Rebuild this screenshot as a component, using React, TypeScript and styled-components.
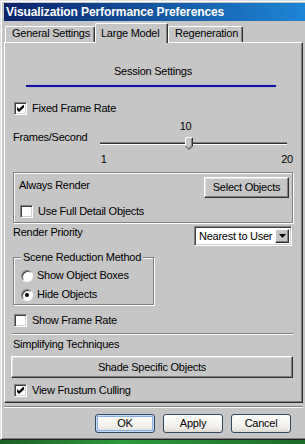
import styled, { createGlobalStyle, css } from 'styled-components';

const FACE = '#c6c6c6';

const GlobalStyle = createGlobalStyle`
  html, body {
    margin: 0;
    padding: 0;
  }
  body {
    background: #236e30;
    font-family: "Liberation Sans", Arial, sans-serif;
    font-size: 11px;
    letter-spacing: -0.25px;
    color: #000;
  }
  * {
    box-sizing: border-box;
  }
`;

const Desktop = styled.div`
  width: 305px;
  height: 444px;
  overflow: hidden;
  background: linear-gradient(to right, #1d5f28, #2f9a3e 40%, #1d6b2a);
`;

const Window = styled.div`
  width: 312px;
  height: 440px;
  display: flex;
  flex-direction: column;
  background: ${FACE};
  border-top: 1px solid #e2e2e2;
  border-left: 1px solid #e2e2e2;
  border-bottom: 1px solid #202020;
  box-shadow: inset 1px 1px 0 #fff, inset 0 -1px 0 #808080;
  padding: 2px 0 0 3px;
`;

const TitleBar = styled.div`
  height: 18px;
  background: linear-gradient(to right, #0a246a, #2088d8);
  color: #fff;
  font-weight: bold;
  font-size: 12px;
  letter-spacing: -0.1px;
  line-height: 18px;
  padding-left: 2px;
  white-space: nowrap;
`;

const TabStrip = styled.div`
  display: flex;
  align-items: flex-end;
  height: 20px;
  margin: 2px 0 -1px;
  padding-left: 1px;
  position: relative;
  z-index: 1;
`;

const Tab = styled.div<{ $active?: boolean; $w: number }>`
  width: ${(p) => p.$w}px;
  height: ${(p) => (p.$active ? 20 : 16)}px;
  margin-bottom: ${(p) => (p.$active ? 0 : 1)}px;
  background: ${FACE};
  border-top: 1px solid #fff;
  border-left: 1px solid #fff;
  border-right: 1px solid #303030;
  box-shadow: inset -1px 0 0 #808080;
  border-radius: 2px 2px 0 0;
  padding: ${(p) => (p.$active ? '3px 0 0 5px' : '0 0 0 6px')};
  line-height: 13px;
  white-space: nowrap;
`;

const Panel = styled.div`
  width: 299px;
  display: flex;
  flex-direction: column;
  border-top: 1px solid #fff;
  border-left: 1px solid #fff;
  border-right: 1px solid #303030;
  border-bottom: 1px solid #303030;
  box-shadow: inset -1px -1px 0 #808080;
  padding: 0 9px 5px 8px;
`;

const SectionTitle = styled.div`
  margin-top: 22px;
  text-align: center;
  line-height: 13px;
`;

const BlueRule = styled.div`
  height: 2px;
  margin: 7px 17px 0 13px;
  background: #1212a2;
  box-shadow: 0 0 1px #6a6ad0;
`;

const CheckRow = styled.label<{ $top: number }>`
  display: flex;
  align-items: center;
  gap: 5px;
  height: 13px;
  margin-top: ${(p) => p.$top}px;
  margin-left: 1px;
  line-height: 13px;
`;

const Box = styled.span`
  width: 13px;
  height: 13px;
  flex: none;
  display: flex;
  align-items: center;
  justify-content: center;
  background: #fff;
  border: 1px solid;
  border-color: #808080 #fff #fff #808080;
  box-shadow: inset 1px 1px 0 #404040, inset -1px -1px 0 #d4d0c8;
`;

const Text = styled.span`
  line-height: 13px;
  white-space: nowrap;
`;

const SliderRow = styled.div`
  display: flex;
  margin-top: 5px;
`;

const FieldLabel = styled.div`
  width: 87px;
  margin-top: 11px;
  line-height: 13px;
  white-space: nowrap;
`;

const SliderBox = styled.div`
  width: 194px;
  display: flex;
  flex-direction: column;
`;

const ValueLabel = styled.div`
  height: 13px;
  line-height: 13px;
`;

const TrackArea = styled.div`
  position: relative;
  height: 20px;
  padding-top: 9px;
`;

const Track = styled.div`
  width: 187px;
  height: 3px;
  border-top: 1px solid #808080;
  background: #303030;
  border-bottom: 1px solid #fff;
`;

const Thumb = styled.svg`
  position: absolute;
  top: 4px;
`;

const Scale = styled.div`
  display: flex;
  justify-content: space-between;
  padding-left: 1px;
  line-height: 13px;
`;

const etched = css`
  border: 1px solid #808080;
  box-shadow: inset 1px 1px 0 #fff, 1px 1px 0 #fff;
`;

const Group = styled.div`
  ${etched};
  margin-top: 6px;
  display: flex;
  flex-direction: column;
  padding: 4px 3px 4px 5px;
`;

const GroupHead = styled.div`
  display: flex;
  justify-content: space-between;
  align-items: flex-start;
`;

const GroupText = styled.div`
  margin-top: 2px;
  line-height: 13px;
`;

const ClassicButton = styled.button<{ $w?: number }>`
  width: ${(p) => (p.$w ? `${p.$w}px` : 'auto')};
  height: 22px;
  padding: 0;
  font: inherit;
  letter-spacing: inherit;
  color: #000;
  background: ${FACE};
  border: 1px solid;
  border-color: #fff #303030 #303030 #fff;
  box-shadow: inset -1px -1px 0 #808080, inset 1px 1px 0 #e4e4e4;
  line-height: 13px;
`;

const SelectObjectsButton = styled(ClassicButton)`
  height: 21px;
`;

const WideButton = styled(ClassicButton)`
  margin: 5px 0 0 -2px;
  width: 282px;
`;

const PriorityRow = styled.div`
  display: flex;
  justify-content: space-between;
  align-items: flex-start;
  margin-top: 3px;
  padding-right: 1px;
`;

const Select = styled.div`
  width: 98px;
  height: 20px;
  display: flex;
  align-items: center;
  background: #fff;
  border: 1px solid;
  border-color: #808080 #fff #fff #808080;
  box-shadow: inset 1px 1px 0 #404040, inset -1px -1px 0 #d4d0c8;
  padding: 2px;
`;

const SelectValue = styled.span`
  flex: 1;
  padding-left: 2px;
  line-height: 14px;
  white-space: nowrap;
`;

const SelectArrow = styled.span`
  width: 14px;
  height: 14px;
  display: flex;
  align-items: center;
  justify-content: center;
  background: ${FACE};
  border: 1px solid;
  border-color: #fff #303030 #303030 #fff;
  box-shadow: inset -1px -1px 0 #808080;
`;

const Frame = styled.div`
  ${etched};
  width: 141px;
  margin-top: 11px;
  display: flex;
  flex-direction: column;
  gap: 6px;
  padding: 0 0 3px 7px;
`;

const Legend = styled.div`
  align-self: flex-start;
  margin: -7px 0 -1px 0;
  padding: 0 2px;
  background: ${FACE};
  line-height: 13px;
  white-space: nowrap;
`;

const RadioRow = styled.label`
  display: flex;
  align-items: center;
  gap: 4px;
  height: 13px;
`;

const RadioDot = styled.span<{ $on?: boolean }>`
  width: 12px;
  height: 12px;
  flex: none;
  border-radius: 50%;
  display: flex;
  align-items: center;
  justify-content: center;
  background: #fff;
  border: 1px solid;
  border-color: #808080 #fff #fff #808080;
  box-shadow: inset 1px 1px 0 #404040;

  &::after {
    content: '';
    width: 4px;
    height: 4px;
    border-radius: 50%;
    background: ${(p) => (p.$on ? '#000' : 'transparent')};
  }
`;

const Separator = styled.div<{ $top: number; $wide?: boolean }>`
  height: 2px;
  margin-top: ${(p) => p.$top}px;
  margin-left: ${(p) => (p.$wide ? 0 : -1)}px;
  border-top: 1px solid #808080;
  border-bottom: 1px solid #fff;
`;

const PlainLabel = styled.div`
  margin-top: 3px;
  line-height: 13px;
`;

const DialogFooter = styled.div`
  width: 299px;
  display: flex;
  flex-direction: column;
`;

const ButtonRow = styled.div`
  display: flex;
  justify-content: flex-end;
  gap: 8px;
  margin-top: 6px;
  padding-right: 12px;
`;

const DialogButton = styled.button<{ $default?: boolean }>`
  width: 60px;
  height: 19px;
  padding: 0;
  font: inherit;
  letter-spacing: inherit;
  color: #000;
  line-height: 13px;
  border: 1px solid #34465e;
  border-radius: 3px;
  background: linear-gradient(#fefefe, #f1f0ec 70%, #dcdad2);
  ${(p) =>
    p.$default &&
    css`
      box-shadow: inset 0 0 0 1px #c4dcfc, inset 0 0 0 2px #8cb0e4;
    `}
`;

const Check = ({ on }: { on?: boolean }) => (
  <Box>
    {on && (
      <svg width="7" height="7" viewBox="0 0 7 7">
        <polygon points="0,2 2,4 6,0 7,0 7,2.5 2,7 0,5" fill="#000" />
      </svg>
    )}
  </Box>
);

const Slider = ({ min, max, value }: { min: number; max: number; value: number }) => {
  const trackWidth = 187;
  const thumbLeft = Math.round(((value - min) / (max - min)) * (trackWidth - 8));
  return (
    <SliderBox>
      <ValueLabel style={{ paddingLeft: thumbLeft - 5 }}>{value}</ValueLabel>
      <TrackArea>
        <Track />
        <Thumb width="8" height="13" viewBox="0 0 8 13" style={{ left: thumbLeft }}>
          <polygon points="0.5,1 1,0.5 7,0.5 7.5,1 7.5,9 4,12.5 0.5,9" fill={FACE} />
          <polyline points="0.5,9 0.5,1 1,0.5 7,0.5" fill="none" stroke="#fff" />
          <polyline points="7.5,1 7.5,9 4,12.5 0.5,9" fill="none" stroke="#303030" />
          <polyline points="6.5,1.5 6.5,8.6 4,11.2" fill="none" stroke="#808080" />
        </Thumb>
      </TrackArea>
      <Scale>
        <span>{min}</span>
        <span>{max}</span>
      </Scale>
    </SliderBox>
  );
};

const App = () => {
  return (
    <Desktop>
      <GlobalStyle />
      <Window>
        <TitleBar>Visualization Performance Preferences</TitleBar>
        <TabStrip>
          <Tab $w={90}>General Settings</Tab>
          <Tab $w={73} $active>
            Large Model
          </Tab>
          <Tab $w={75}>Regeneration</Tab>
        </TabStrip>
        <Panel>
          <SectionTitle>Session Settings</SectionTitle>
          <BlueRule />
          <CheckRow $top={15}>
            <Check on />
            <Text>Fixed Frame Rate</Text>
          </CheckRow>
          <SliderRow>
            <FieldLabel>Frames/Second</FieldLabel>
            <Slider min={1} max={20} value={10} />
          </SliderRow>
          <Group>
            <GroupHead>
              <GroupText>Always Render</GroupText>
              <SelectObjectsButton $w={85}>Select Objects</SelectObjectsButton>
            </GroupHead>
            <CheckRow $top={7}>
              <Check />
              <Text>Use Full Detail Objects</Text>
            </CheckRow>
          </Group>
          <PriorityRow>
            <Text>Render Priority</Text>
            <Select>
              <SelectValue>Nearest to User</SelectValue>
              <SelectArrow>
                <svg width="7" height="4" viewBox="0 0 7 4">
                  <polygon points="0,0 7,0 3.5,4" fill="#000" />
                </svg>
              </SelectArrow>
            </Select>
          </PriorityRow>
          <Frame>
            <Legend>Scene Reduction Method</Legend>
            <RadioRow>
              <RadioDot />
              <Text>Show Object Boxes</Text>
            </RadioRow>
            <RadioRow>
              <RadioDot $on />
              <Text>Hide Objects</Text>
            </RadioRow>
          </Frame>
          <CheckRow $top={9}>
            <Check />
            <Text>Show Frame Rate</Text>
          </CheckRow>
          <Separator $top={6} />
          <PlainLabel>Simplifying Techniques</PlainLabel>
          <WideButton>Shade Specific Objects</WideButton>
          <CheckRow $top={6}>
            <Check on />
            <Text>View Frustum Culling</Text>
          </CheckRow>
        </Panel>
        <DialogFooter>
          <Separator $top={3} $wide />
          <ButtonRow>
            <DialogButton $default>OK</DialogButton>
            <DialogButton>Apply</DialogButton>
            <DialogButton>Cancel</DialogButton>
          </ButtonRow>
        </DialogFooter>
      </Window>
    </Desktop>
  );
};

export default App;
